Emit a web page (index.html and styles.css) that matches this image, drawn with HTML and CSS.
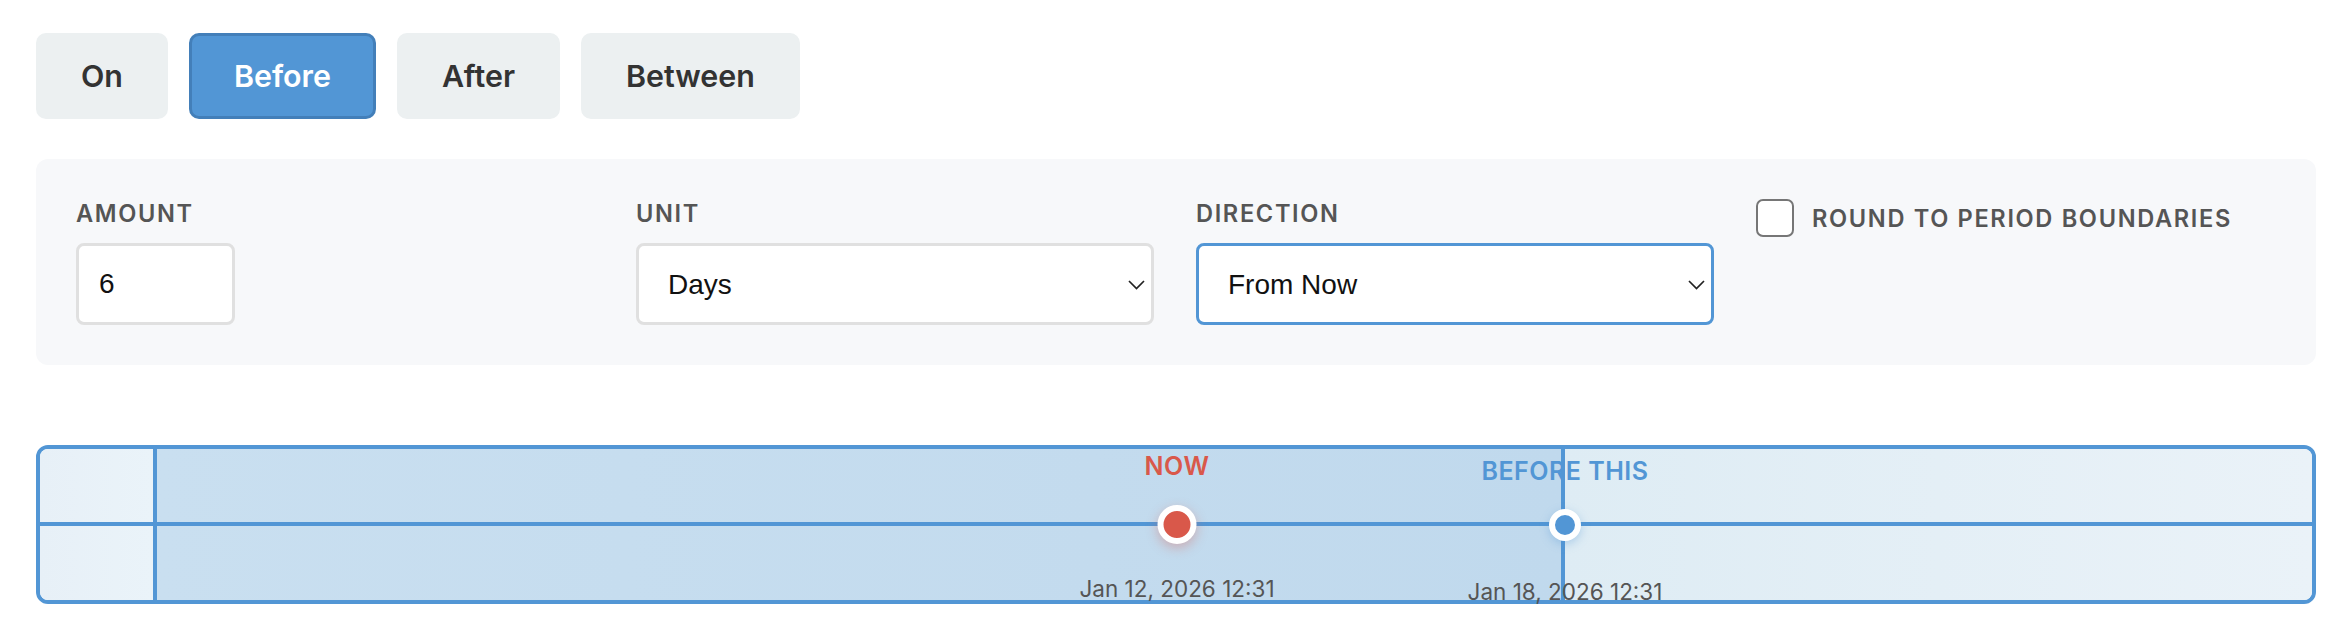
FILE: index.html
```html
<!DOCTYPE html>
<html lang="en">
<head>
  <meta charset="UTF-8">
  <title>Date filter – Before</title>
  <link rel="stylesheet" href="styles.css">
</head>
<body>

  <div class="modes">
    <button class="mode">On</button>
    <button class="mode active">Before</button>
    <button class="mode">After</button>
    <button class="mode">Between</button>
  </div>

  <div class="panel">
    <div class="field">
      <label class="label" for="amount">Amount</label>
      <input type="text" id="amount" class="input amount" value="6">
    </div>

    <div class="field">
      <label class="label" for="unit">Unit</label>
      <div class="select-wrap">
        <select id="unit" class="input select">
          <option>Days</option>
          <option>Weeks</option>
          <option>Months</option>
        </select>
        <svg class="chevron" width="17" height="10" viewBox="0 0 17 10"><polyline points="1,1 8.5,8.5 16,1" fill="none" stroke="#222" stroke-width="1.7"/></svg>
      </div>
    </div>

    <div class="field">
      <label class="label" for="direction">Direction</label>
      <div class="select-wrap">
        <select id="direction" class="input select focused">
          <option>From Now</option>
          <option>Ago</option>
        </select>
        <svg class="chevron" width="17" height="10" viewBox="0 0 17 10"><polyline points="1,1 8.5,8.5 16,1" fill="none" stroke="#222" stroke-width="1.7"/></svg>
      </div>
    </div>

    <div class="field">
      <label class="check">
        <span class="box"></span>
        <span class="label">Round to period boundaries</span>
      </label>
    </div>
  </div>

  <div class="timeline">
    <div class="track">
      <div class="seg seg-out"></div>
      <div class="seg seg-range" style="width: 1412px"></div>
      <div class="seg seg-after"></div>
    </div>
    <div class="axis"></div>

    <div class="marker now" style="left: 1137px">
      <span class="m-label">Now</span>
      <span class="m-dot"></span>
      <span class="m-date">Jan 12, 2026 12:31</span>
    </div>

    <div class="marker edge" style="left: 1525px">
      <span class="m-label">Before this</span>
      <span class="m-dot"></span>
      <span class="m-date">Jan 18, 2026 12:31</span>
    </div>
  </div>

</body>
</html>
```

FILE: styles.css
```css
body {
  font-family: Inter, "Noto Sans", sans-serif;
  background: #fff;
  color: #333;
  margin: 0;
  padding: 33px 28px 0 36px;
}

.modes {
  display: flex;
  gap: 21px;
}

.mode {
  font-family: Inter, "Noto Sans", sans-serif;
  font-size: 30.4px;
  font-weight: 600;
  line-height: 32px;
  color: #333;
  background: #ecf0f1;
  border: 3px solid #ecf0f1;
  border-radius: 10px;
  padding: 24px 42px;
}

.mode.active {
  background: #5296d5;
  border-color: #437fb9;
  color: #fff;
}

.panel {
  margin-top: 40px;
  background: #f7f8fa;
  border-radius: 12px;
  padding: 40px;
  display: grid;
  grid-template-columns: repeat(4, 520px);
  gap: 40px;
}

.field {
  display: flex;
  flex-direction: column;
  align-items: flex-start;
}

.label {
  font-size: 23.6px;
  font-weight: 600;
  line-height: 29px;
  letter-spacing: 1.65px;
  text-transform: uppercase;
  color: #555;
  margin-bottom: 15px;
}

.input {
  box-sizing: border-box;
  height: 82px;
  font-family: "Liberation Sans", Arial, sans-serif;
  font-size: 28px;
  color: #111;
  background: #fff;
  border: 3px solid #e0e0e0;
  border-radius: 8px;
  outline: none;
}

.amount {
  width: 159px;
  padding: 0 20px;
}

.select-wrap {
  position: relative;
  width: 518px;
}

.select {
  appearance: none;
  -webkit-appearance: none;
  width: 100%;
  padding: 0 40px 0 29px;
}

.select.focused {
  border-color: #5296d5;
}

.chevron {
  position: absolute;
  right: 9px;
  top: 37px;
  pointer-events: none;
}

.check {
  display: flex;
  align-items: center;
  gap: 18px;
}

.check .label {
  margin-bottom: 0;
}

.box {
  box-sizing: border-box;
  width: 38px;
  height: 38px;
  background: #fff;
  border: 2.5px solid #767676;
  border-radius: 7px;
}

.timeline {
  position: relative;
  margin-top: 80px;
  height: 151px;
  border: 4px solid #5296d5;
  border-radius: 12px;
}

.track {
  display: flex;
  height: 100%;
  border-radius: 8px;
  overflow: hidden;
}

.seg {
  box-sizing: border-box;
  height: 100%;
}

.seg-out {
  width: 113px;
  background: linear-gradient(90deg, #e7f0f7, #eaf3f9);
}

.seg-range {
  border-left: 4px solid #5296d5;
  border-right: 4px solid #5296d5;
  background: linear-gradient(90deg, #c9dff0, #c0d9ed);
}

.seg-after {
  flex: 1;
  background: linear-gradient(90deg, #deecf4, #eaf2f8);
}

.axis {
  position: absolute;
  left: 0;
  right: 0;
  top: 73px;
  height: 4px;
  background: #5296d5;
}

.marker {
  position: absolute;
  top: 0;
  height: 100%;
}

.marker > span {
  position: absolute;
  left: 0;
  transform: translateX(-50%);
  white-space: nowrap;
}

.m-label {
  font-size: 25px;
  font-weight: 600;
  line-height: 28px;
  letter-spacing: 0.5px;
  text-transform: uppercase;
}

.m-date {
  font-size: 22.5px;
  line-height: 26px;
  color: #555;
}

.m-dot {
  box-sizing: border-box;
  border-radius: 50%;
  border: 6px solid #fff;
}

.now .m-label {
  top: 3px;
  color: #d9584a;
}

.now .m-dot {
  top: 56px;
  width: 39px;
  height: 39px;
  background: #d9584a;
  box-shadow: 0 4px 12px rgba(217, 88, 74, 0.35);
}

.now .m-date {
  top: 127px;
}

.edge .m-label {
  top: 8px;
  color: #5296d5;
}

.edge .m-dot {
  top: 60px;
  width: 32px;
  height: 32px;
  background: #5296d5;
  box-shadow: 0 3px 10px rgba(82, 150, 213, 0.35);
}

.edge .m-date {
  top: 130px;
}
```
